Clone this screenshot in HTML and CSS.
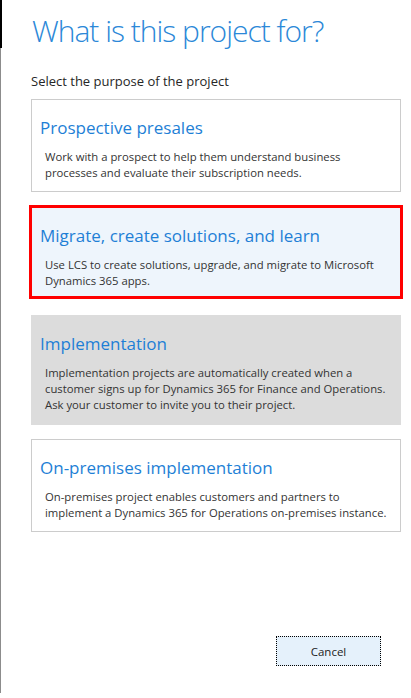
FILE: index.html
```html
<!DOCTYPE html>
<html lang="en">
<head>
<meta charset="utf-8">
<title>What is this project for?</title>
<link rel="stylesheet" href="styles.css">
</head>
<body>
<div class="page">
  <div class="edge">
    <div class="edge-top"></div>
    <div class="edge-rest"></div>
  </div>
  <main class="main">
    <h1 class="title">What is this project for?</h1>
    <p class="subtitle">Select the purpose of the project</p>
    <div class="cards">
      <div class="card card-1">
        <h2 class="card-title">Prospective presales</h2>
        <p class="card-desc">Work with a prospect to help them understand business<br>processes and evaluate their subscription needs.</p>
      </div>
      <div class="card card-2 selected">
        <h2 class="card-title">Migrate, create solutions, and learn</h2>
        <p class="card-desc">Use LCS to create solutions, upgrade, and migrate to Microsoft<br>Dynamics 365 apps.</p>
      </div>
      <div class="card card-3 disabled">
        <h2 class="card-title">Implementation</h2>
        <p class="card-desc">Implementation projects are automatically created when a<br>customer signs up for Dynamics 365 for Finance and Operations.<br>Ask your customer to invite you to their project.</p>
      </div>
      <div class="card card-4">
        <h2 class="card-title">On-premises implementation</h2>
        <p class="card-desc">On-premises project enables customers and partners to<br>implement a Dynamics 365 for Operations on-premises instance.</p>
      </div>
    </div>
    <div class="actions">
      <button class="btn-cancel" type="button">Cancel</button>
    </div>
  </main>
</div>
</body>
</html>
```
FILE: styles.css
```css
* { box-sizing: border-box; }
html, body { margin: 0; padding: 0; background: #ffffff; }
body { font-family: "Open Sans", "Noto Sans", sans-serif; color: #333333; }

.page {
  display: flex;
  height: 693px;
}

.edge {
  display: flex;
  flex-direction: column;
  width: 2px;
}
.edge-top { height: 48px; background: #000000; }
.edge-rest { flex: 1; width: 1px; background: #8c8c8c; }

.main {
  flex: 1;
  padding: 0 0 0 29px;
  display: flex;
  flex-direction: column;
}

.title {
  margin: 11px 0 0 1px;
  font-family: "Open Sans", sans-serif;
  font-size: 30px;
  line-height: 40px;
  font-weight: 300;
  letter-spacing: -1px;
  color: #2b88d8;
}

.subtitle {
  margin: 22px 0 0 0;
  font-size: 13px;
  line-height: 16px;
  color: #262626;
}

.cards {
  display: flex;
  flex-direction: column;
  margin-top: 10px;
  width: 370px;
}

.card {
  border: 1px solid #cccccc;
  background: #ffffff;
  padding: 16px 0 0 8px;
}
.card-title {
  margin: 0;
  font-size: 17px;
  line-height: 24px;
  font-weight: 400;
  color: #1e7fd6;
}
.card-desc {
  margin: 9px 0 0 5px;
  font-size: 11.3px;
  line-height: 16px;
  color: #333333;
}

.card-1 { height: 93px; }
.card-2 {
  height: 94px;
  margin: 13px -2px 0 -2px;
  border: 3px solid #ff0000;
  background: #eef5fc;
  padding: 16px 0 0 8px;
}
.card-3 {
  height: 110px;
  margin-top: 16px;
  border-color: #dcdcdc;
  background: #dcdcdc;
}
.card-4 {
  height: 93px;
  margin-top: 14px;
}

.actions {
  display: flex;
  justify-content: flex-end;
  margin-top: auto;
  padding: 0 30px 27px 0;
}
.btn-cancel {
  width: 105px;
  height: 30px;
  border: 1px dotted #000000;
  background: #e5f1fb;
  font-family: "Open Sans", "Noto Sans", sans-serif;
  font-size: 11.5px;
  color: #222222;
  padding: 0;
}
```
